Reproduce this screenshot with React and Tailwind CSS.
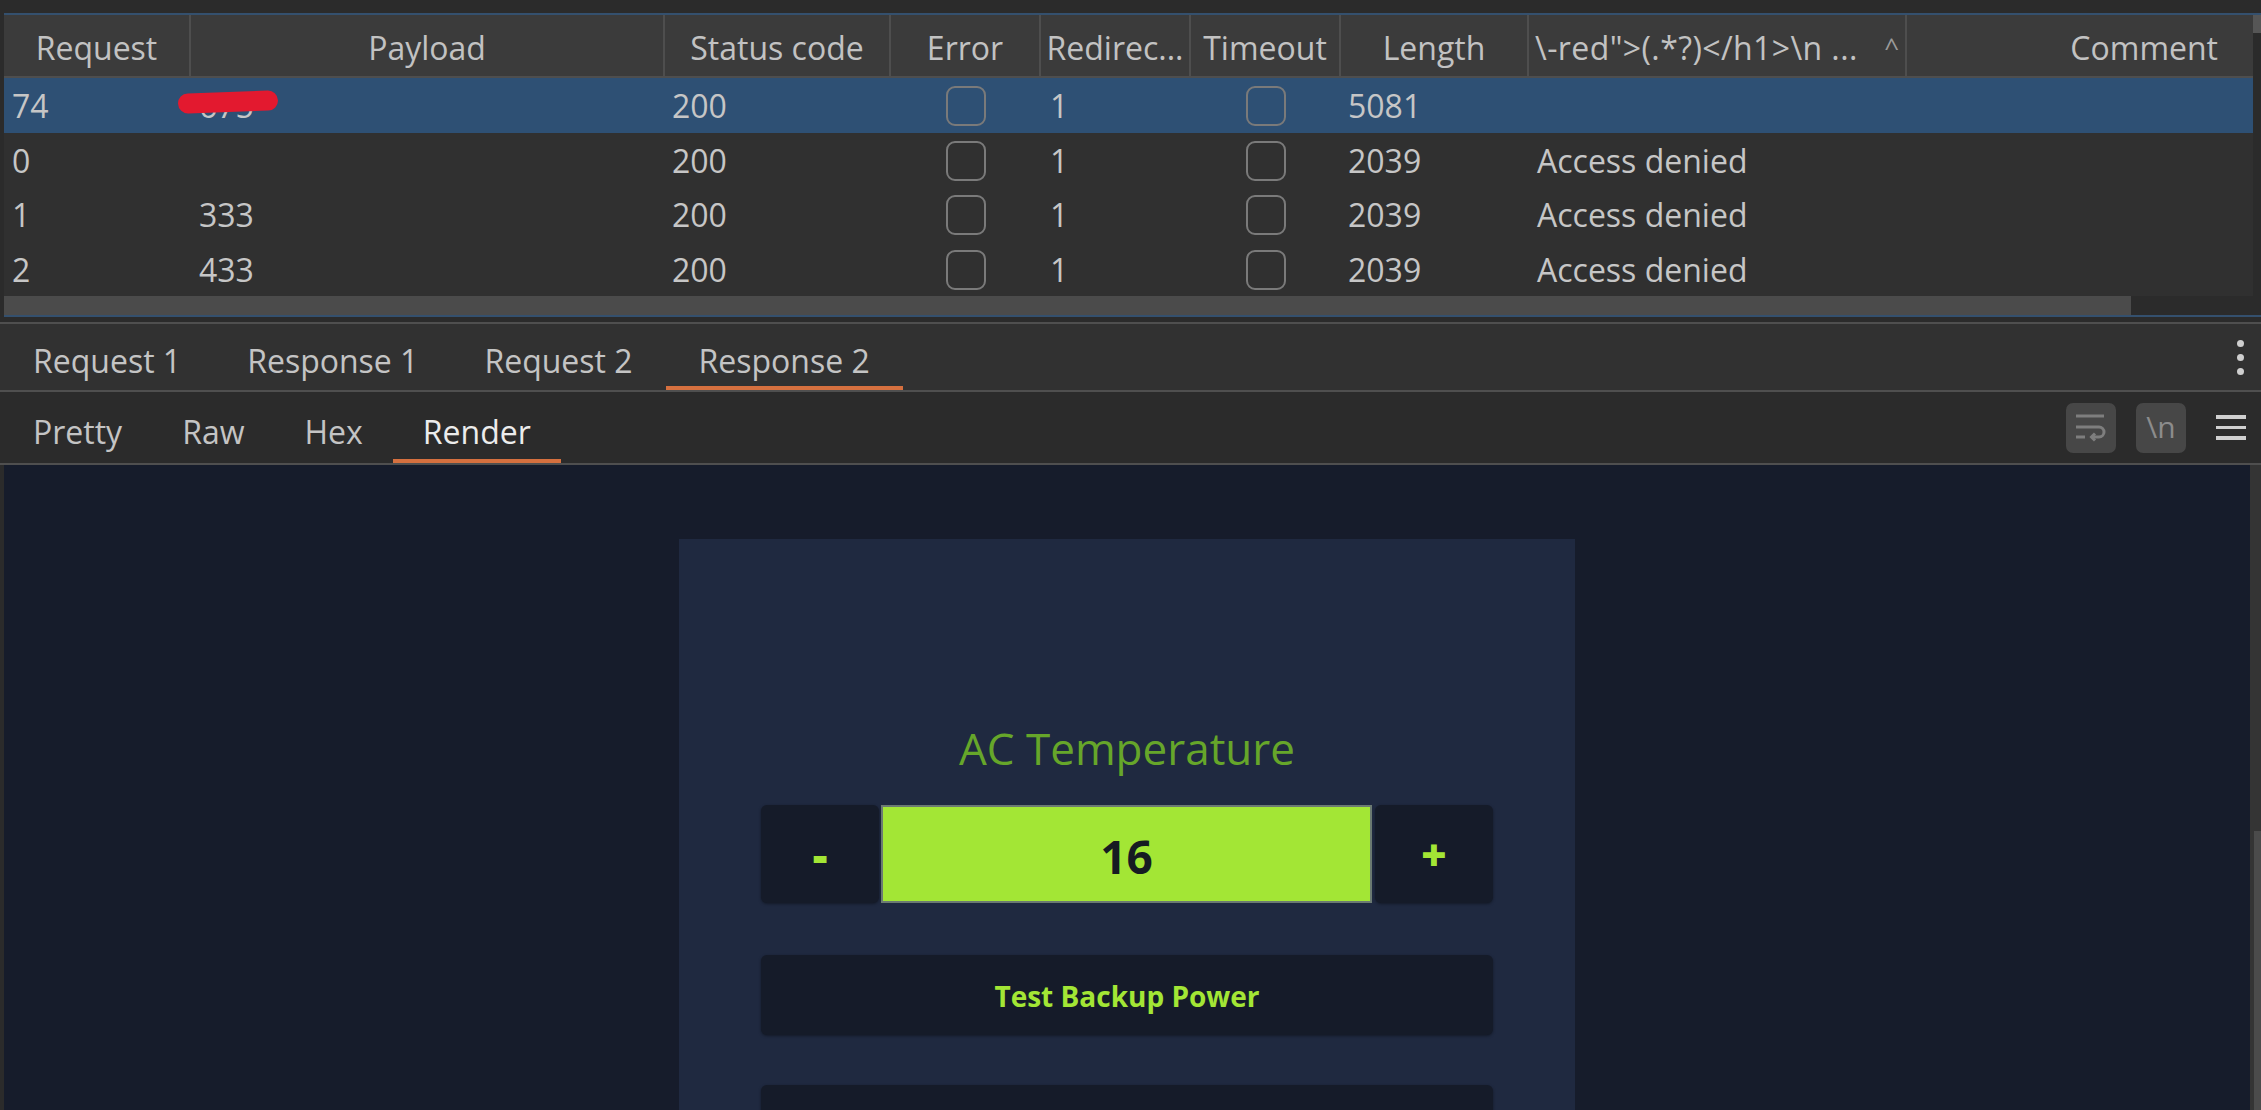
const columns = [
  { key: 'request', label: 'Request', width: 'w-[187px]' },
  { key: 'payload', label: 'Payload', width: 'w-[474px]' },
  { key: 'status', label: 'Status code', width: 'w-[226px]' },
  { key: 'error', label: 'Error', width: 'w-[150px]' },
  { key: 'redirects', label: 'Redirec...', width: 'w-[150px]' },
  { key: 'timeout', label: 'Timeout', width: 'w-[150px]' },
  { key: 'length', label: 'Length', width: 'w-[188px]' },
]

const rows = [
  { request: '74', payload: '675', status: '200', redirects: '1', length: '5081', grep: '', selected: true },
  { request: '0', payload: '', status: '200', redirects: '1', length: '2039', grep: 'Access denied' },
  { request: '1', payload: '333', status: '200', redirects: '1', length: '2039', grep: 'Access denied' },
  { request: '2', payload: '433', status: '200', redirects: '1', length: '2039', grep: 'Access denied' },
]

function Checkbox() {
  return <div className="h-[40px] w-[40px] rounded-[9px] border-2 border-[#7a7a7a]" />
}

function HeaderRow() {
  return (
    <div className="flex h-[63px] border-b-2 border-[#4e4e4e] bg-[#3b3b3b] pt-[4px] text-[32px] text-[#c2c2c2]">
      {columns.map((col) => (
        <div
          key={col.key}
          className={`${col.width} -mt-[4px] flex shrink-0 items-center justify-center border-r-2 border-[#4e4e4e] pt-[4px] whitespace-nowrap`}
        >
          {col.label}
        </div>
      ))}
      <div className="-mt-[4px] flex w-[378px] shrink-0 items-center justify-between border-r-2 border-[#4e4e4e] pt-[4px] pr-[6px] pl-[6px] whitespace-nowrap">
        <span className="tracking-[0.4px]">{'\\-red">(.*?)</h1>\\n ...'}</span>
        <span className="text-[26px] text-[#9a9a9a]">^</span>
      </div>
      <div className="flex flex-1 items-center justify-end pr-[35px]">Comment</div>
    </div>
  )
}

function ResultRow({ row }) {
  return (
    <div
      className={`relative flex h-[54.5px] items-center pt-[2px] text-[32px] text-[#c6c6c6] ${
        row.selected ? 'bg-[#2e5074]' : 'bg-[#303030]'
      }`}
    >
      <div className="w-[187px] shrink-0 pl-[8px]">{row.request}</div>
      <div className="w-[474px] shrink-0 pl-[8px]">{row.payload}</div>
      <div className="w-[226px] shrink-0 pl-[7px]">{row.status}</div>
      <div className="flex w-[150px] shrink-0 justify-center">
        <Checkbox />
      </div>
      <div className="w-[150px] shrink-0 pl-[9px]">{row.redirects}</div>
      <div className="flex w-[150px] shrink-0 justify-center">
        <Checkbox />
      </div>
      <div className="w-[188px] shrink-0 pl-[7px]">{row.length}</div>
      <div className="w-[378px] shrink-0 pl-[8px] whitespace-nowrap">{row.grep}</div>
      <div className="flex-1" />
      {row.selected ? (
        <div className="absolute top-[14px] left-[174px] h-[20px] w-[100px] -rotate-2 rounded-full bg-[#e3192f]" />
      ) : null}
    </div>
  )
}

function ResultsTable() {
  return (
    <div className="ml-[4px] flex shrink-0 border-t-2 border-b-2 border-[#34506e]">
      <div className="flex flex-1 flex-col">
        <HeaderRow />
        {rows.map((row) => (
          <ResultRow key={row.request} row={row} />
        ))}
        <div className="h-[19px] bg-[#2b2b2b]">
          <div className="h-full w-[2127px] bg-[#4b4b4b]" />
        </div>
      </div>
      <div className="w-[8px] bg-[#2b2b2b]">
        <div className="h-[18px] bg-[#565656]" />
      </div>
    </div>
  )
}

function MessageTabs() {
  const tabs = ['Request 1', 'Response 1', 'Request 2', 'Response 2']
  return (
    <div className="flex h-[68px] shrink-0 border-t-2 border-[#4f4f4f] bg-[#313131]">
      {tabs.map((tab) => (
        <div
          key={tab}
          className={`flex items-center border-b-4 px-[33px] pt-[12px] text-[32px] whitespace-nowrap text-[#c4c4c4] ${
            tab === 'Response 2' ? 'border-[#d5703f]' : 'border-transparent'
          }`}
        >
          {tab}
        </div>
      ))}
      <div className="flex-1" />
      <div className="flex flex-col items-center justify-center gap-[7px] pr-[17px]">
        <span className="h-[7px] w-[7px] rounded-full bg-[#cfcfcf]" />
        <span className="h-[7px] w-[7px] rounded-full bg-[#cfcfcf]" />
        <span className="h-[7px] w-[7px] rounded-full bg-[#cfcfcf]" />
      </div>
    </div>
  )
}

function WrapIcon() {
  return (
    <svg width="50" height="50" viewBox="0 0 50 50" fill="none" stroke="#7e7e7e" strokeWidth="3">
      <path d="M10 13 H38" />
      <path d="M10 24 H33 a5 5 0 0 1 0 10 H26" />
      <path d="M29 30.5 L25.5 34 L29 37.5" />
      <path d="M10 34 H19" />
    </svg>
  )
}

function ViewTabs() {
  const tabs = ['Pretty', 'Raw', 'Hex', 'Render']
  return (
    <div className="flex h-[73px] shrink-0 border-t-2 border-[#4f4f4f] bg-[#2b2b2b] pl-[3px]">
      {tabs.map((tab) => (
        <div
          key={tab}
          className={`flex items-center border-b-4 px-[30px] pt-[13px] text-[32px] whitespace-nowrap ${
            tab === 'Render' ? 'border-[#d5703f] text-[#ececec]' : 'border-transparent text-[#c4c4c4]'
          }`}
        >
          {tab}
        </div>
      ))}
      <div className="flex-1" />
      <div className="flex items-center pr-[15px]">
        <div className="h-[50px] w-[50px] rounded-[7px] bg-[#474747]">
          <WrapIcon />
        </div>
        <div className="ml-[20px] flex h-[50px] w-[50px] items-center justify-center rounded-[7px] bg-[#474747] pb-[2px] text-[30px] text-[#8c8c8c]">
          \n
        </div>
        <div className="ml-[30px] flex w-[30px] flex-col gap-[7px]">
          <span className="h-[3.5px] bg-[#d0d0d0]" />
          <span className="h-[3.5px] bg-[#d0d0d0]" />
          <span className="h-[3.5px] bg-[#d0d0d0]" />
        </div>
      </div>
    </div>
  )
}

function ControlPanel() {
  return (
    <div className="mx-auto mt-[74px] w-[896px] bg-[#1f2940] px-[82px] pt-[183px] pb-[40px]">
      <h2 className="text-center text-[44px] leading-[52px] text-[#66a62a]">AC Temperature</h2>
      <div className="mt-[31px] flex h-[98px] gap-[2px]">
        <button
          type="button"
          className="flex w-[118px] items-center justify-center rounded-[6px] bg-[#151b29] text-[46px] font-extrabold text-[#a3e635] shadow-[0_1px_3px_rgba(0,0,0,0.4)]"
        >
          -
        </button>
        <div className="flex flex-1 items-center justify-center border-2 border-[#6b7a72] bg-[#a3e635] pt-[4px] text-[46px] font-bold text-[#161b22]">
          16
        </div>
        <button
          type="button"
          className="ml-[1px] flex w-[118px] items-center justify-center rounded-[6px] bg-[#151b29] text-[44px] font-extrabold text-[#a3e635] shadow-[0_1px_3px_rgba(0,0,0,0.4)]"
        >
          +
        </button>
      </div>
      <button
        type="button"
        className="mt-[52px] flex h-[80px] w-full items-center justify-center rounded-[6px] bg-[#151b29] pt-[2px] text-[28px] font-bold text-[#a3e635] shadow-[0_1px_3px_rgba(0,0,0,0.4)]"
      >
        Test Backup Power
      </button>
      <div className="mt-[50px] h-[80px] rounded-[6px] bg-[#151b29] shadow-[0_1px_3px_rgba(0,0,0,0.4)]" />
    </div>
  )
}

function RenderPane() {
  return (
    <div className="flex min-h-0 flex-1 border-t-2 border-[#4f4f4f] bg-[#2b2b2b] pl-[4px]">
      <div className="min-w-0 flex-1 overflow-hidden bg-[#161c2b]">
        <ControlPanel />
      </div>
      <div className="flex w-[11px] flex-col bg-[#343434]">
        <div className="h-[366px] shrink-0" />
        <div className="ml-[4px] flex-1 bg-[#4b4b4b]" />
      </div>
    </div>
  )
}

export default function App() {
  return (
    <div className="flex h-[1110px] w-full flex-col overflow-hidden bg-[#2b2b2b] font-['Open_Sans','Noto_Sans',sans-serif]">
      <div className="h-[13px] shrink-0" />
      <ResultsTable />
      <div className="h-[5px] shrink-0" />
      <MessageTabs />
      <ViewTabs />
      <RenderPane />
    </div>
  )
}
